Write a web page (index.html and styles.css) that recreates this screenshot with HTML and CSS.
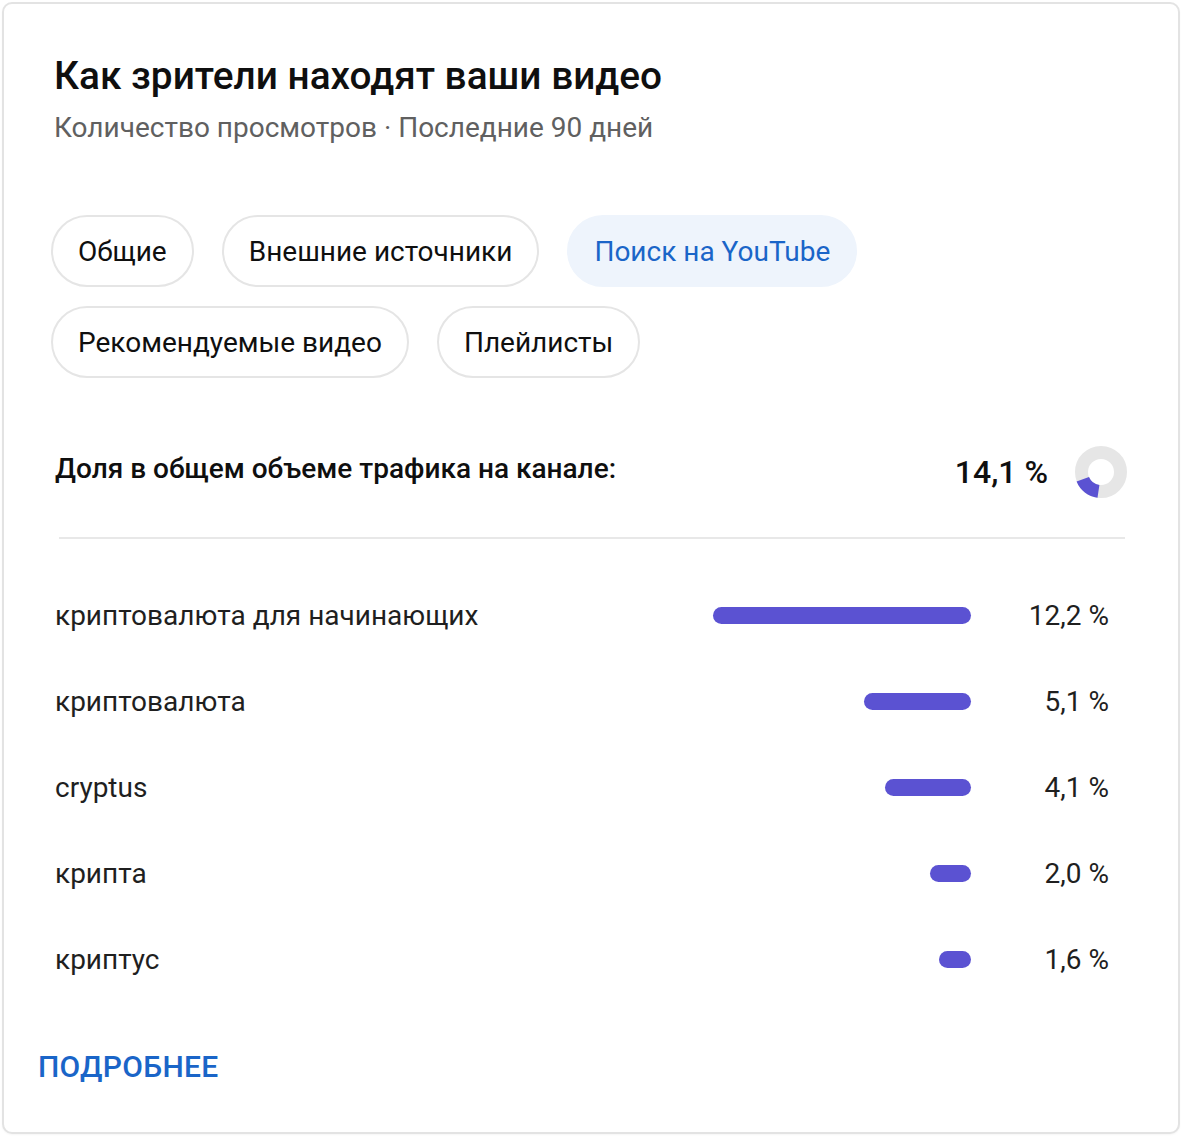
FILE: index.html
```html
<!DOCTYPE html>
<html lang="ru">
<head>
<meta charset="utf-8">
<title>Как зрители находят ваши видео</title>
<link rel="stylesheet" href="styles.css">
</head>
<body>
<div class="card">
  <div class="head">
    <h1 class="title">Как зрители находят ваши видео</h1>
    <div class="subtitle">Количество просмотров · Последние 90 дней</div>
  </div>
  <div class="chips">
    <span class="chip">Общие</span>
    <span class="chip">Внешние источники</span>
    <span class="chip chip-active">Поиск на YouTube</span>
    <span class="chip">Рекомендуемые видео</span>
    <span class="chip">Плейлисты</span>
  </div>
  <div class="share">
    <div class="share-label">Доля в общем объеме трафика на канале:</div>
    <div class="share-value">14,1 %</div>
    <svg class="donut" width="54" height="54" viewBox="0 0 54 54">
      <circle cx="27" cy="27" r="19.5" fill="none" stroke="#e6e6e6" stroke-width="13"/>
      <path d="M 2.6 36.6 A 26 26 0 0 0 23.5 52.8 L 25.4 39.9 A 13 13 0 0 1 15 32 Z" fill="#5b52d2"/>
    </svg>
  </div>
  <div class="divider"></div>
  <div class="rows">
    <div class="row"><span class="label">криптовалюта для начинающих</span><span class="track"><span class="bar" style="width:258px"></span></span><span class="pct">12,2 %</span></div>
    <div class="row"><span class="label">криптовалюта</span><span class="track"><span class="bar" style="width:107px"></span></span><span class="pct">5,1 %</span></div>
    <div class="row"><span class="label">cryptus</span><span class="track"><span class="bar" style="width:86px"></span></span><span class="pct">4,1 %</span></div>
    <div class="row"><span class="label">крипта</span><span class="track"><span class="bar" style="width:41px"></span></span><span class="pct">2,0 %</span></div>
    <div class="row"><span class="label">криптус</span><span class="track"><span class="bar" style="width:32px"></span></span><span class="pct">1,6 %</span></div>
  </div>
  <a class="more" href="#">ПОДРОБНЕЕ</a>
</div>
</body>
</html>
```
FILE: styles.css
```css
* { box-sizing: border-box; }
html, body { margin: 0; padding: 0; background: #fff; }
body {
  font-family: Roboto, "Noto Sans", "Liberation Sans", sans-serif;
  color: #0f0f0f;
}
.card {
  margin: 2px;
  width: 1178px;
  height: 1132px;
  border: 2px solid #e3e3e3;
  border-radius: 10px;
  background: #fff;
  display: flex;
  flex-direction: column;
  box-shadow: 0 1px 2px rgba(0,0,0,0.04);
}
.head { padding: 49px 0 0 50px; }
.title {
  margin: 0;
  font-size: 38.8px;
  font-weight: 500;
  line-height: 46px;
  color: #0f0f0f;
}
.subtitle {
  margin-top: 12px;
  font-size: 28px;
  line-height: 34px;
  color: #606060;
}
.chips {
  display: flex;
  flex-wrap: wrap;
  gap: 19px 28px;
  padding: 70px 53px 0 47px;
}
.chip {
  height: 72px;
  display: inline-flex;
  align-items: center;
  padding: 0 25px;
  border: 2px solid #e5e5e5;
  border-radius: 36px;
  font-size: 28px;
  color: #0f0f0f;
}
.chip-active {
  background: #eef4fc;
  border-color: #eef4fc;
  color: #1a65c8;
}
.share {
  display: flex;
  align-items: center;
  padding: 52px 50px 0 51px;
  height: 136px;
}
.share-label {
  flex: 1;
  font-size: 28px;
  font-weight: 500;
  margin-top: -8px;
}
.share-value {
  font-size: 32px;
  font-weight: 500;
  margin-right: 26px;
}
.donut { display: block; }
.divider {
  margin: 23px 53px 0 55px;
  height: 2px;
  background: #e8e8e8;
}
.rows {
  padding: 33px 0 0 51px;
  display: flex;
  flex-direction: column;
}
.row {
  display: flex;
  align-items: center;
  height: 86px;
}
.label {
  flex: 1;
  font-size: 28px;
  color: #1f1f1f;
}
.track {
  width: 258px;
  display: flex;
  justify-content: flex-end;
}
.bar {
  display: block;
  height: 17px;
  border-radius: 9px;
  background: #5b52d2;
}
.pct {
  width: 207px;
  padding-right: 69px;
  text-align: right;
  font-size: 28px;
  color: #1f1f1f;
  white-space: nowrap;
}
.more {
  margin: 47px 0 0 34px;
  font-size: 30px;
  font-weight: 500;
  color: #1a65c8;
  text-decoration: none;
  letter-spacing: 0.3px;
}
```
